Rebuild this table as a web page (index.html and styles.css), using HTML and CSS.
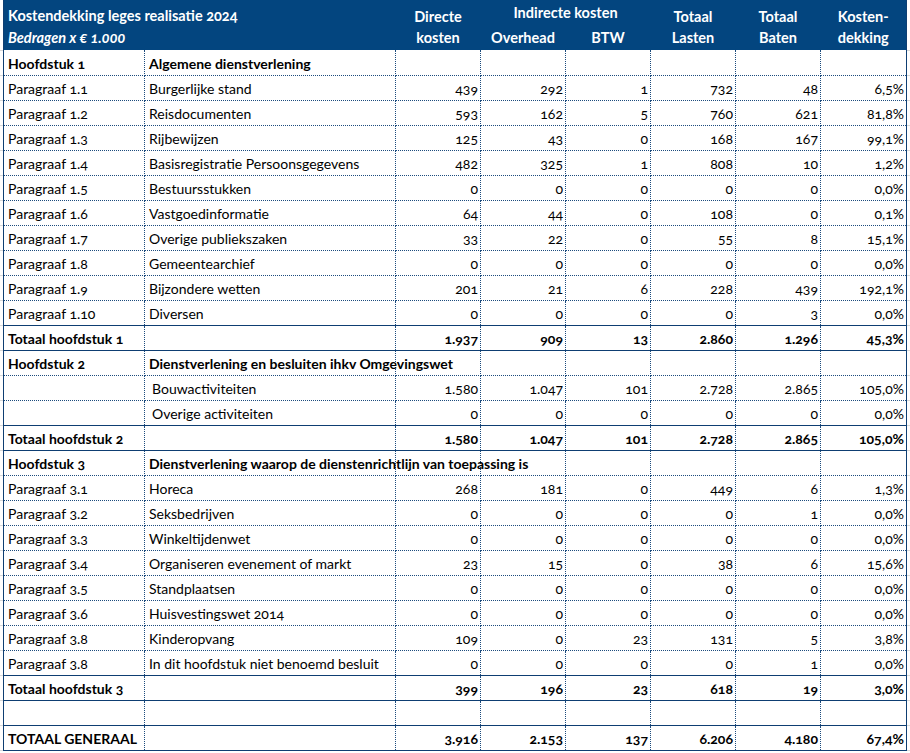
FILE: index.html
```html
<!DOCTYPE html>
<html lang="nl">
<head>
<meta charset="utf-8">
<title>Kostendekking leges realisatie 2024</title>
<link rel="stylesheet" href="styles.css">
</head>
<body>
<table class="sheet">
  <colgroup>
    <col class="c-label"><col class="c-name"><col class="c-num"><col class="c-num"><col class="c-num"><col class="c-num"><col class="c-num"><col class="c-pct">
  </colgroup>
  <thead>
    <tr class="h1">
      <th colspan="2" class="title">Kostendekking leges realisatie 2024</th>
      <th class="top">Directe</th>
      <th colspan="2" class="group">Indirecte kosten</th>
      <th class="top">Totaal</th>
      <th class="top">Totaal</th>
      <th class="top">Kosten-</th>
    </tr>
    <tr class="h2">
      <th colspan="2" class="subtitle">Bedragen x € 1.000</th>
      <th class="bot">kosten</th>
      <th class="bot">Overhead</th>
      <th class="bot">BTW</th>
      <th class="bot">Lasten</th>
      <th class="bot">Baten</th>
      <th class="bot">dekking</th>
    </tr>
  </thead>
  <tbody>
    <tr class="hd"><td>Hoofdstuk 1</td><td>Algemene dienstverlening</td><td></td><td></td><td></td><td></td><td></td><td></td></tr>
    <tr><td>Paragraaf 1.1</td><td>Burgerlijke stand</td><td class="n">439</td><td class="n">292</td><td class="n">1</td><td class="n">732</td><td class="n">48</td><td class="n">6,5%</td></tr>
    <tr><td>Paragraaf 1.2</td><td>Reisdocumenten</td><td class="n">593</td><td class="n">162</td><td class="n">5</td><td class="n">760</td><td class="n">621</td><td class="n">81,8%</td></tr>
    <tr><td>Paragraaf 1.3</td><td>Rijbewijzen</td><td class="n">125</td><td class="n">43</td><td class="n">0</td><td class="n">168</td><td class="n">167</td><td class="n">99,1%</td></tr>
    <tr><td>Paragraaf 1.4</td><td>Basisregistratie Persoonsgegevens</td><td class="n">482</td><td class="n">325</td><td class="n">1</td><td class="n">808</td><td class="n">10</td><td class="n">1,2%</td></tr>
    <tr><td>Paragraaf 1.5</td><td>Bestuursstukken</td><td class="n">0</td><td class="n">0</td><td class="n">0</td><td class="n">0</td><td class="n">0</td><td class="n">0,0%</td></tr>
    <tr><td>Paragraaf 1.6</td><td>Vastgoedinformatie</td><td class="n">64</td><td class="n">44</td><td class="n">0</td><td class="n">108</td><td class="n">0</td><td class="n">0,1%</td></tr>
    <tr><td>Paragraaf 1.7</td><td>Overige publiekszaken</td><td class="n">33</td><td class="n">22</td><td class="n">0</td><td class="n">55</td><td class="n">8</td><td class="n">15,1%</td></tr>
    <tr><td>Paragraaf 1.8</td><td>Gemeentearchief</td><td class="n">0</td><td class="n">0</td><td class="n">0</td><td class="n">0</td><td class="n">0</td><td class="n">0,0%</td></tr>
    <tr><td>Paragraaf 1.9</td><td>Bijzondere wetten</td><td class="n">201</td><td class="n">21</td><td class="n">6</td><td class="n">228</td><td class="n">439</td><td class="n">192,1%</td></tr>
    <tr><td>Paragraaf 1.10</td><td>Diversen</td><td class="n">0</td><td class="n">0</td><td class="n">0</td><td class="n">0</td><td class="n">3</td><td class="n">0,0%</td></tr>
    <tr class="tot"><td>Totaal hoofdstuk 1</td><td></td><td class="n">1.937</td><td class="n">909</td><td class="n">13</td><td class="n">2.860</td><td class="n">1.296</td><td class="n">45,3%</td></tr>
    <tr class="hd"><td>Hoofdstuk 2</td><td>Dienstverlening en besluiten ihkv Omgevingswet</td><td></td><td></td><td></td><td></td><td></td><td></td></tr>
    <tr><td></td><td class="ind">Bouwactiviteiten</td><td class="n">1.580</td><td class="n">1.047</td><td class="n">101</td><td class="n">2.728</td><td class="n">2.865</td><td class="n">105,0%</td></tr>
    <tr><td></td><td class="ind">Overige activiteiten</td><td class="n">0</td><td class="n">0</td><td class="n">0</td><td class="n">0</td><td class="n">0</td><td class="n">0,0%</td></tr>
    <tr class="tot"><td>Totaal hoofdstuk 2</td><td></td><td class="n">1.580</td><td class="n">1.047</td><td class="n">101</td><td class="n">2.728</td><td class="n">2.865</td><td class="n">105,0%</td></tr>
    <tr class="hd"><td>Hoofdstuk 3</td><td>Dienstverlening waarop de dienstenrichtlijn van toepassing is</td><td></td><td></td><td></td><td></td><td></td><td></td></tr>
    <tr><td>Paragraaf 3.1</td><td>Horeca</td><td class="n">268</td><td class="n">181</td><td class="n">0</td><td class="n">449</td><td class="n">6</td><td class="n">1,3%</td></tr>
    <tr><td>Paragraaf 3.2</td><td>Seksbedrijven</td><td class="n">0</td><td class="n">0</td><td class="n">0</td><td class="n">0</td><td class="n">1</td><td class="n">0,0%</td></tr>
    <tr><td>Paragraaf 3.3</td><td>Winkeltijdenwet</td><td class="n">0</td><td class="n">0</td><td class="n">0</td><td class="n">0</td><td class="n">0</td><td class="n">0,0%</td></tr>
    <tr><td>Paragraaf 3.4</td><td>Organiseren evenement of markt</td><td class="n">23</td><td class="n">15</td><td class="n">0</td><td class="n">38</td><td class="n">6</td><td class="n">15,6%</td></tr>
    <tr><td>Paragraaf 3.5</td><td>Standplaatsen</td><td class="n">0</td><td class="n">0</td><td class="n">0</td><td class="n">0</td><td class="n">0</td><td class="n">0,0%</td></tr>
    <tr><td>Paragraaf 3.6</td><td>Huisvestingswet 2014</td><td class="n">0</td><td class="n">0</td><td class="n">0</td><td class="n">0</td><td class="n">0</td><td class="n">0,0%</td></tr>
    <tr><td>Paragraaf 3.8</td><td>Kinderopvang</td><td class="n">109</td><td class="n">0</td><td class="n">23</td><td class="n">131</td><td class="n">5</td><td class="n">3,8%</td></tr>
    <tr><td>Paragraaf 3.8</td><td>In dit hoofdstuk niet benoemd besluit</td><td class="n">0</td><td class="n">0</td><td class="n">0</td><td class="n">0</td><td class="n">1</td><td class="n">0,0%</td></tr>
    <tr class="tot"><td>Totaal hoofdstuk 3</td><td></td><td class="n">399</td><td class="n">196</td><td class="n">23</td><td class="n">618</td><td class="n">19</td><td class="n">3,0%</td></tr>
    <tr class="gap"><td></td><td></td><td></td><td></td><td></td><td></td><td></td><td></td></tr>
    <tr class="tot"><td>TOTAAL GENERAAL</td><td></td><td class="n">3.916</td><td class="n">2.153</td><td class="n">137</td><td class="n">6.206</td><td class="n">4.180</td><td class="n">67,4%</td></tr>
  </tbody>
</table>
</body>
</html>
```

FILE: styles.css
```css
html, body {
  margin: 0;
  padding: 0;
  background: #ffffff;
}

body {
  width: 910px;
  height: 753px;
  overflow: hidden;
  background-image: repeating-linear-gradient(to bottom, #d9d9d9 0 1px, transparent 1px 25px);
  background-size: 100% 703px;
  background-position: 0 50px;
  background-repeat: no-repeat;
}

.sheet {
  margin-left: 3px;
  width: 903px;
  table-layout: fixed;
  border-collapse: collapse;
  background: #ffffff;
  border: 1px solid #0e3e72;
  border-top: none;
  font-family: Lato, "Open Sans", "Noto Sans", sans-serif;
  font-size: 14px;
  font-variant-numeric: oldstyle-nums;
  color: #000;
}

.c-label { width: 141px; }
.c-name { width: 251px; }
.c-num { width: 85px; }
.c-pct { width: 86px; }

.sheet thead tr { height: 25px; }

.sheet th {
  background: #03457f;
  color: #ffffff;
  font-weight: bold;
  font-size: 14.5px;
  border: none;
  padding: 0;
  line-height: 16px;
  vertical-align: top;
  text-align: center;
  white-space: nowrap;
}

.sheet th.title {
  text-align: left;
  padding: 8px 0 0 4px;
}

.sheet th.subtitle {
  text-align: left;
  font-style: italic;
  padding: 5px 0 0 4px;
}

.sheet th.top { padding-top: 9px; }
.sheet th.group { padding-top: 5px; }
.sheet th.bot { padding-top: 5px; }

.sheet tbody tr { height: 25px; }

.sheet td {
  border: 1px dotted #1c4b7d;
  padding: 0 3px 3px 4px;
  line-height: 16px;
  vertical-align: bottom;
  white-space: nowrap;
  overflow: visible;
}

.sheet tbody tr:first-child td { border-top-style: hidden; }

.sheet td.n {
  text-align: right;
  padding-right: 2px;
}

.sheet td.ind { padding-left: 7px; }

.sheet tr.hd td { font-weight: bold; }

.sheet tr.tot td {
  font-weight: bold;
  border-top: 1px solid #0e3e72;
  border-bottom: 1px solid #0e3e72;
}
```
